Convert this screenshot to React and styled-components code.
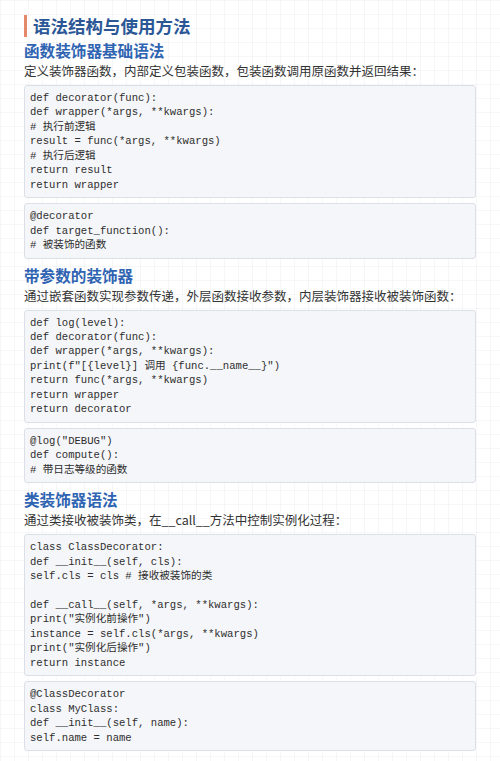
import React from "react";
import styled, { createGlobalStyle } from "styled-components";

const Global = createGlobalStyle`
  html, body { margin: 0; padding: 0; }
  body {
    background-color: #ffffff;
    background-image:
      linear-gradient(to right, rgba(60, 70, 110, 0.045) 1px, transparent 1px),
      linear-gradient(to bottom, rgba(60, 70, 110, 0.045) 1px, transparent 1px);
    background-size: 14px 14px;
    font-family: "Noto Sans CJK SC", "Noto Sans", sans-serif;
    color: #333;
  }
`;

const Page = styled.div`
  padding: 15px 24px 12px 24px;
  display: flex;
  flex-direction: column;
`;

const Title = styled.h1`
  margin: 0;
  font-size: 17.5px;
  line-height: 22px;
  font-weight: 700;
  color: #2b5796;
  border-left: 3px solid #e4876a;
  padding-left: 6px;
`;

const Heading = styled.h2`
  margin: ${(p) => (p.$first ? "3px" : "6px")} 0 0 0;
  font-size: 15.6px;
  line-height: 20px;
  font-weight: 700;
  color: #2f64b2;
`;

const Para = styled.p`
  margin: 0 0 3px 0;
  font-size: 12.5px;
  line-height: 22px;
  color: #333;
`;

const Code = styled.pre`
  margin: ${(p) => (p.$follow ? "5px" : "0")} 0 0 0;
  padding: 5px 5px;
  background: #f5f6f9;
  border: 1px solid #dcdfe5;
  border-radius: 3px;
  font-family: "Liberation Mono", "Noto Sans CJK SC", monospace;
  font-size: 10.6px;
  line-height: 14.45px;
  color: #2e2e2e;
  white-space: pre;
  overflow: hidden;
`;

const sections = [
  {
    h: "函数装饰器基础语法",
    p: "定义装饰器函数，内部定义包装函数，包装函数调用原函数并返回结果：",
    blocks: [
      `def decorator(func):
def wrapper(*args, **kwargs):
# 执行前逻辑
result = func(*args, **kwargs)
# 执行后逻辑
return result
return wrapper`,
      `@decorator
def target_function():
# 被装饰的函数`,
    ],
  },
  {
    h: "带参数的装饰器",
    p: "通过嵌套函数实现参数传递，外层函数接收参数，内层装饰器接收被装饰函数：",
    blocks: [
      `def log(level):
def decorator(func):
def wrapper(*args, **kwargs):
print(f"[{level}] 调用 {func.__name__}")
return func(*args, **kwargs)
return wrapper
return decorator`,
      `@log("DEBUG")
def compute():
# 带日志等级的函数`,
    ],
  },
  {
    h: "类装饰器语法",
    p: "通过类接收被装饰类，在__call__方法中控制实例化过程：",
    blocks: [
      `class ClassDecorator:
def __init__(self, cls):
self.cls = cls # 接收被装饰的类

def __call__(self, *args, **kwargs):
print("实例化前操作")
instance = self.cls(*args, **kwargs)
print("实例化后操作")
return instance`,
      `@ClassDecorator
class MyClass:
def __init__(self, name):
self.name = name`,
    ],
  },
];

export default function App() {
  return (
    <>
      <Global />
      <Page>
        <Title>语法结构与使用方法</Title>
        {sections.map((s, i) => (
          <React.Fragment key={i}>
            <Heading $first={i === 0}>{s.h}</Heading>
            <Para>{s.p}</Para>
            {s.blocks.map((b, j) => (
              <Code key={j} $follow={j > 0}>
                {b}
              </Code>
            ))}
          </React.Fragment>
        ))}
      </Page>
    </>
  );
}
